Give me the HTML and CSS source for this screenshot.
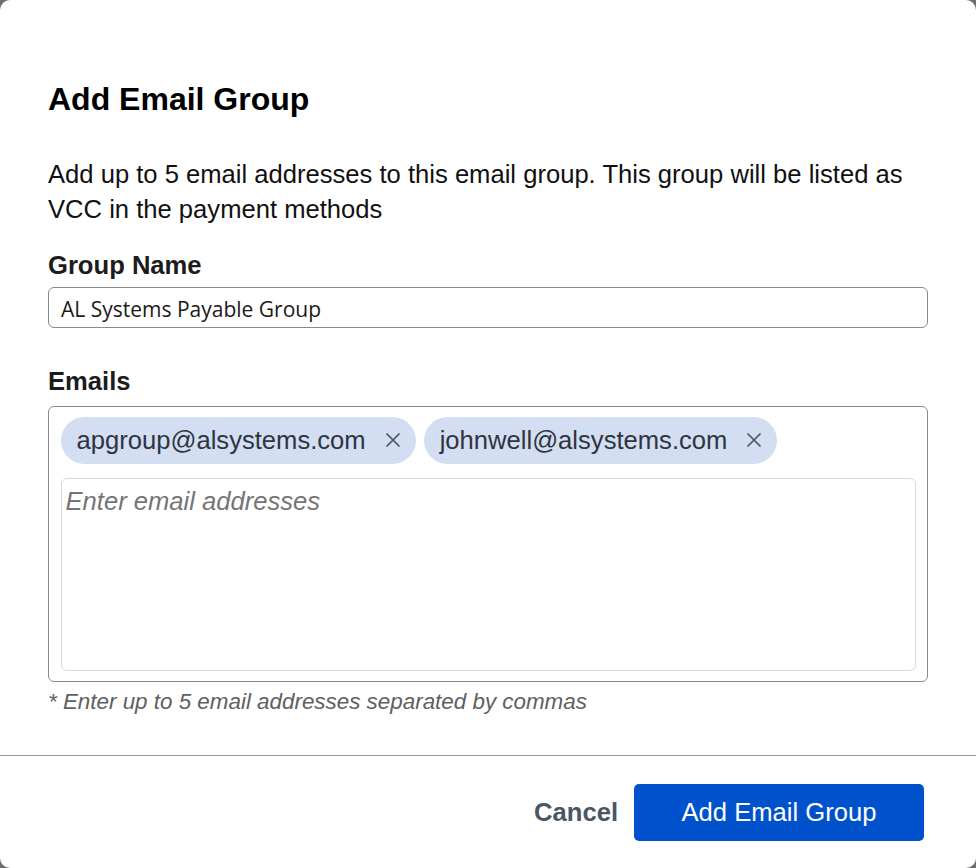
FILE: index.html
```html
<!DOCTYPE html>
<html lang="en">
<head>
<meta charset="utf-8">
<title>Add Email Group</title>
<link rel="stylesheet" href="styles.css">
</head>
<body>
<div class="modal">
  <div class="content">
    <h1 class="title">Add Email Group</h1>
    <p class="desc">Add up to 5 email addresses to this email group. This group will be listed as VCC in the payment methods</p>
    <label class="label label-first">Group Name</label>
    <div class="input">AL Systems Payable Group</div>
    <label class="label label-emails">Emails</label>
    <div class="emails-box">
      <div class="chips">
        <span class="chip">apgroup@alsystems.com
          <svg class="x" viewBox="0 0 14 14" width="14" height="14"><path d="M1 1 L13 13 M13 1 L1 13" stroke="currentColor" stroke-width="1.7" stroke-linecap="round" fill="none"/></svg>
        </span>
        <span class="chip">johnwell@alsystems.com
          <svg class="x" viewBox="0 0 14 14" width="14" height="14"><path d="M1 1 L13 13 M13 1 L1 13" stroke="currentColor" stroke-width="1.7" stroke-linecap="round" fill="none"/></svg>
        </span>
      </div>
      <div class="textarea"><span class="placeholder">Enter email addresses</span></div>
    </div>
    <p class="helper">* Enter up to 5 email addresses separated by commas</p>
  </div>
  <div class="footer">
    <span class="cancel">Cancel</span>
    <span class="primary">Add Email Group</span>
  </div>
</div>
</body>
</html>
```

FILE: styles.css
```css
* { box-sizing: border-box; }
html, body { margin: 0; padding: 0; }
body {
  background: #6e6e6e;
  font-family: "Liberation Sans", Arial, sans-serif;
}
.modal {
  width: 976px;
  height: 868px;
  background: #fff;
  border-radius: 10px;
  overflow: hidden;
  display: flex;
  flex-direction: column;
}
.content {
  flex: 1;
  padding: 79px 48px 0 48px;
}
.title {
  margin: 0;
  font-size: 32px;
  line-height: 40px;
  font-weight: 700;
  color: #000;
}
.desc {
  margin: 37.5px 0 0;
  font-size: 25.6px;
  line-height: 35.2px;
  color: #111;
}
.label {
  display: block;
  font-size: 25.6px;
  line-height: 35.2px;
  font-weight: 700;
  color: #1c1c1c;
}
.label-first { margin-top: 21.5px; }
.label-emails { margin-top: 36px; }
.input {
  margin-top: 3.3px;
  height: 41.5px;
  border: 1.5px solid #8a8a8a;
  border-radius: 6px;
  padding: 2px 12px 0;
  display: flex;
  align-items: center;
  font-family: "Open Sans", "Noto Sans", sans-serif;
  font-size: 21px;
  color: #1a1a1a;
}
.emails-box {
  margin-top: 6px;
  height: 276.5px;
  border: 1.5px solid #8a8a8a;
  border-radius: 6px;
  padding: 10px 11.5px 10.5px 11.5px;
  display: flex;
  flex-direction: column;
}
.chips {
  display: flex;
  gap: 8px;
  margin-bottom: 14px;
}
.chip {
  height: 47px;
  border-radius: 24px;
  background: #d3def3;
  padding: 0 16px 0 16px;
  display: inline-flex;
  align-items: center;
  gap: 20px;
  font-size: 25.6px;
  color: #2e3440;
}
.x {
  width: 14px;
  height: 14px;
  color: #4a5566;
}
.textarea {
  flex: 1;
  border: 1px solid #d9d9d9;
  border-radius: 6px;
  padding: 4px 4px;
}
.placeholder {
  font-size: 25.6px;
  font-style: italic;
  color: #757575;
  line-height: 36px;
}
.helper {
  margin: 4.5px 0 0;
  font-size: 22.4px;
  line-height: 30px;
  font-style: italic;
  color: #606060;
}
.footer {
  height: 113px;
  border-top: 1px solid #9a9a9a;
  display: flex;
  justify-content: flex-end;
  align-items: center;
  gap: 16px;
  padding: 0 52px 0 0;
}
.cancel {
  font-size: 25.6px;
  font-weight: 700;
  color: #4b5566;
}
.primary {
  width: 290px;
  height: 57px;
  border-radius: 5px;
  background: #0052cc;
  color: #fff;
  font-size: 25.6px;
  display: flex;
  align-items: center;
  justify-content: center;
}
```
